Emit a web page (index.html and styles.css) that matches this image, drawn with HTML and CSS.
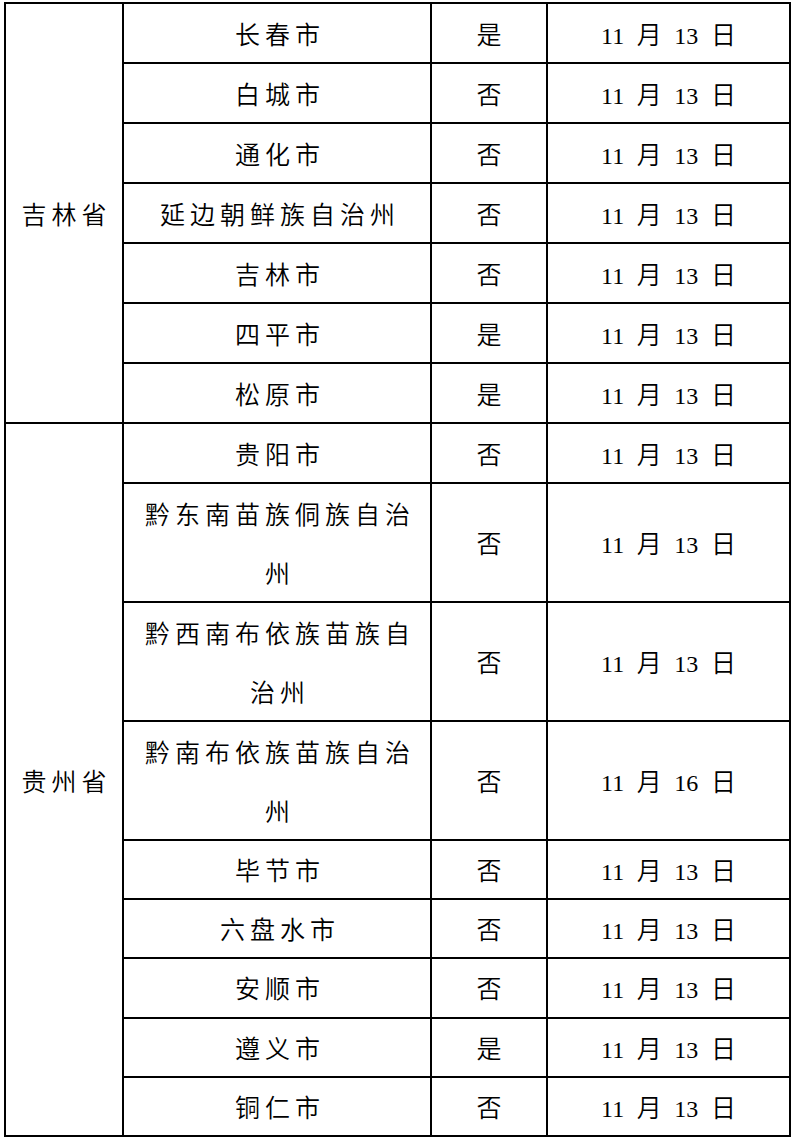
FILE: index.html
```html
<!DOCTYPE html>
<html lang="zh-CN">
<head>
<meta charset="utf-8">
<title>表格</title>
<link rel="stylesheet" href="styles.css">
</head>
<body>
<table class="grid">
  <colgroup>
    <col class="c-prov">
    <col class="c-city">
    <col class="c-flag">
    <col class="c-date">
  </colgroup>
  <tbody>
    <tr class="r1">
      <td class="prov" rowspan="7">吉林省</td>
      <td class="city">长春市</td><td class="flag">是</td>
      <td class="date"><span class="n">11</span> 月 <span class="n">13</span> 日</td>
    </tr>
    <tr class="r1">
      <td class="city">白城市</td><td class="flag">否</td>
      <td class="date"><span class="n">11</span> 月 <span class="n">13</span> 日</td>
    </tr>
    <tr class="r1">
      <td class="city">通化市</td><td class="flag">否</td>
      <td class="date"><span class="n">11</span> 月 <span class="n">13</span> 日</td>
    </tr>
    <tr class="r1">
      <td class="city">延边朝鲜族自治州</td><td class="flag">否</td>
      <td class="date"><span class="n">11</span> 月 <span class="n">13</span> 日</td>
    </tr>
    <tr class="r1">
      <td class="city">吉林市</td><td class="flag">否</td>
      <td class="date"><span class="n">11</span> 月 <span class="n">13</span> 日</td>
    </tr>
    <tr class="r1">
      <td class="city">四平市</td><td class="flag">是</td>
      <td class="date"><span class="n">11</span> 月 <span class="n">13</span> 日</td>
    </tr>
    <tr class="r1">
      <td class="city">松原市</td><td class="flag">是</td>
      <td class="date"><span class="n">11</span> 月 <span class="n">13</span> 日</td>
    </tr>
    <tr class="r1">
      <td class="prov" rowspan="9">贵州省</td>
      <td class="city">贵阳市</td><td class="flag">否</td>
      <td class="date"><span class="n">11</span> 月 <span class="n">13</span> 日</td>
    </tr>
    <tr class="r2">
      <td class="city">黔东南苗族侗族自治州</td><td class="flag">否</td>
      <td class="date"><span class="n">11</span> 月 <span class="n">13</span> 日</td>
    </tr>
    <tr class="r2">
      <td class="city">黔西南布依族苗族自治州</td><td class="flag">否</td>
      <td class="date"><span class="n">11</span> 月 <span class="n">13</span> 日</td>
    </tr>
    <tr class="r2">
      <td class="city">黔南布依族苗族自治州</td><td class="flag">否</td>
      <td class="date"><span class="n">11</span> 月 <span class="n">16</span> 日</td>
    </tr>
    <tr class="r3">
      <td class="city">毕节市</td><td class="flag">否</td>
      <td class="date"><span class="n">11</span> 月 <span class="n">13</span> 日</td>
    </tr>
    <tr class="r3">
      <td class="city">六盘水市</td><td class="flag">否</td>
      <td class="date"><span class="n">11</span> 月 <span class="n">13</span> 日</td>
    </tr>
    <tr class="r3">
      <td class="city">安顺市</td><td class="flag">否</td>
      <td class="date"><span class="n">11</span> 月 <span class="n">13</span> 日</td>
    </tr>
    <tr class="r3">
      <td class="city">遵义市</td><td class="flag">是</td>
      <td class="date"><span class="n">11</span> 月 <span class="n">13</span> 日</td>
    </tr>
    <tr class="r3">
      <td class="city">铜仁市</td><td class="flag">否</td>
      <td class="date"><span class="n">11</span> 月 <span class="n">13</span> 日</td>
    </tr>
  </tbody>
</table>
</body>
</html>
```

FILE: styles.css
```css
html, body {
  margin: 0;
  padding: 0;
  background: #ffffff;
}

body {
  padding: 2px 0 0 4px;
  font-family: "Noto Sans CJK SC", "Liberation Serif", sans-serif;
  color: #000000;
}

.grid {
  border-collapse: collapse;
  table-layout: fixed;
  width: 785px;
  margin: 0;
}

.c-prov { width: 118px; }
.c-city { width: 308px; }
.c-flag { width: 116px; }
.c-date { width: 243px; }

.grid td {
  border: 2px solid #000000;
  padding: 0;
  text-align: center;
  vertical-align: middle;
  font-size: 25px;
  font-weight: 350;
  letter-spacing: 5px;
  color: #000000;
}

.r1 td { line-height: 58px; }
.r2 td { line-height: 58.5px; }
.r3 td { line-height: 57.2px; }

.grid td.prov {
  line-height: 40px;
  padding-left: 5px;
}

.grid td.city {
  padding: 0 6px 0 12px;
}

.grid td.flag {
  padding-left: 5px;
}

.grid td.date {
  letter-spacing: 0;
  word-spacing: 7px;
  padding-left: 0;
}

.n {
  font-family: "Liberation Serif", serif;
  font-size: 24px;
  font-weight: 400;
  line-height: 1;
  letter-spacing: 0;
}
```
